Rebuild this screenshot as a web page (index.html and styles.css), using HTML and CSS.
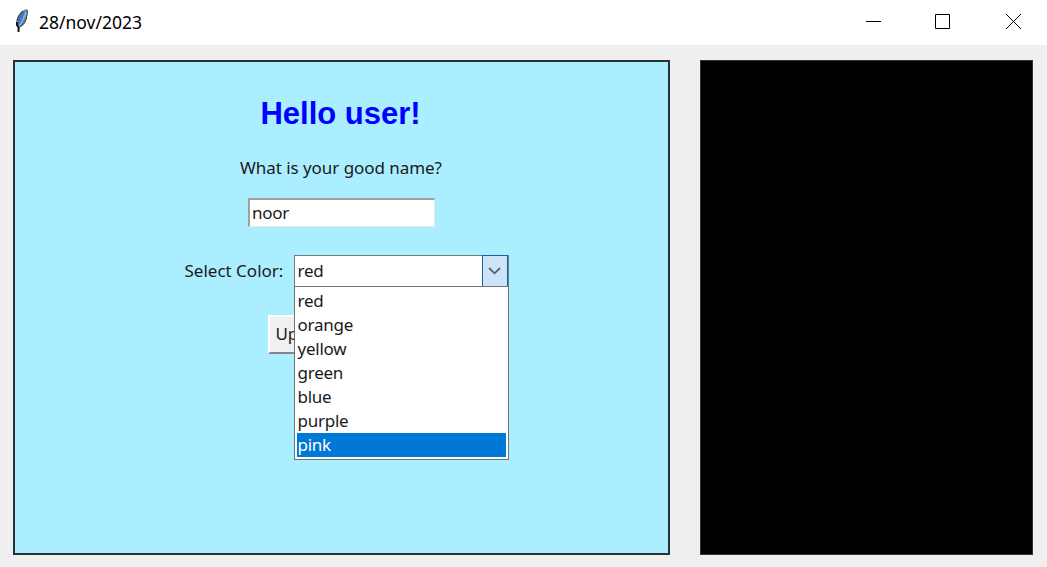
FILE: index.html
```html
<!DOCTYPE html>
<html lang="en">
<head>
<meta charset="utf-8">
<title>28/nov/2023</title>
<link rel="stylesheet" href="styles.css">
</head>
<body>
<header class="titlebar">
  <svg class="feather" width="16" height="26" viewBox="0 0 16 26">
    <path d="M13.500 1C8 1 4 6 2.500 12C1.500 15 2 18 4.500 20L5 24L6.500 19C10 18 12 14 12.500 10C13 7 14 4 13.500 1Z" fill="#aaa69c"/>
    <path d="M12 2C8 3 5 7 3.800 12C3 15 3.300 17 5 19C9 17 11 13 11.400 9C12 6 13 4 12 2Z" fill="#3f79bd"/>
    <path d="M12 3C11 8 8 14 5 19" fill="none" stroke="#80b4ec" stroke-width="1.500"/>
    <path d="M13 2C14 5 12.500 8 12.200 11C11 15 9 17 6 18.500M9 3C6 5 4 9 3 13" fill="none" stroke="#2a2d32" stroke-width="1"/>
    <path d="M3 14C2.500 16 3 18 4.500 19V24" fill="none" stroke="#0b0b0b" stroke-width="1.800"/>
  </svg>
  <span class="title">28/nov/2023</span>
  <div class="controls">
    <svg width="15" height="15" viewBox="0 0 15 15"><path d="M0 7.500H15"/></svg>
    <svg width="15" height="15" viewBox="0 0 15 15"><path d="M.5 .5H14.500V14.500H.5Z"/></svg>
    <svg width="15" height="15" viewBox="0 0 15 15"><path d="M0 0L15 15M15 0L0 15"/></svg>
  </div>
</header>
<main class="window">
  <section class="form">
    <h1 class="heading">Hello user!</h1>
    <p class="question">What is your good name?</p>
    <div class="entry">noor</div>
    <div class="row">
      <span class="label">Select Color:</span>
      <div class="combo">
        <span class="value">red</span>
        <span class="arrow"><svg width="13" height="8" viewBox="0 0 13 8"><path d="M1 1L6.500 6.300L12 1"/></svg></span>
        <ul class="menu">
          <li>red</li><li>orange</li><li>yellow</li><li>green</li><li>blue</li><li>purple</li><li class="selected">pink</li>
        </ul>
      </div>
    </div>
    <div class="button">Up</div>
  </section>
  <section class="canvas"></section>
</main>
</body>
</html>
```
FILE: styles.css
```css
* { box-sizing: border-box; }
body { margin: 0; width: 1047px; height: 567px; overflow: hidden; background: #efefef; color: #1a1a1a; font: 17px/24px "Noto Sans", "Open Sans", sans-serif; letter-spacing: -0.25px; }
.titlebar { display: flex; align-items: center; height: 45px; padding: 0 26px 0 14px; background: #fff; }
.feather { margin-top: -3px; }
.title { margin-left: 9px; margin-top: -2px; color: #000; font-size: 17.5px; letter-spacing: 0; }
.controls { display: flex; gap: 55px; margin-left: auto; margin-top: -2px; }
.controls svg { fill: none; stroke: #000; stroke-width: 1; }
.controls svg:first-child { margin-right: -1px; }
.controls svg:last-child { margin-left: 1px; }
.window { display: flex; gap: 30px; height: 522px; padding: 15px 14px 12px 13px; }
.form { display: flex; flex-direction: column; align-items: center; width: 657px; height: 495px; border: 2px solid #253338; background: #aaeeff; }
.canvas { width: 333px; height: 495px; background: #000; border: 1px solid #333; }
.heading { margin: 34px 2px 0 0; font: bold 31px/36px "Liberation Sans", Arial, sans-serif; letter-spacing: 0; color: #00f; }
.question { margin: 24px 1px 0 0; line-height: 24px; letter-spacing: -0.05px; }
.entry { width: 187px; height: 29px; margin-top: 18px; padding: 1px 2px; background: #fff; border: 1px solid #e5eaec; border-top: 2px solid #a0a0a0; border-left: 2px solid #a0a0a0; }
.row { display: flex; align-items: center; margin-top: 28px; margin-left: 9px; height: 32px; }
.label { width: 110px; padding-left: 1px; letter-spacing: 0; }
.combo { position: relative; display: flex; width: 215px; height: 32px; background: #fff; border: 1px solid #7a7a7a; }
.value { flex: 1; padding: 3px; }
.arrow { display: flex; align-items: center; justify-content: center; width: 26px; margin: -1px 0; background: #cce4f7; border: 1.5px solid #1764ae; }
.arrow path { fill: none; stroke: #606060; stroke-width: 1.8; }
.menu { position: absolute; z-index: 1; top: 30px; left: -1px; width: 215px; height: 174px; margin: 0; padding: 2px; background: #fff; border: 1px solid #747474; list-style: none; }
.menu li { height: 24px; padding-left: 1px; line-height: 24px; }
.menu .selected { color: #fff; background: #0078d7; }
.button { width: 148px; height: 39px; margin-top: 28px; padding: 5px 6px; background: #f0f0f0; border: 2px solid #fff; border-right-color: #858585; border-bottom-color: #858585; }
```
